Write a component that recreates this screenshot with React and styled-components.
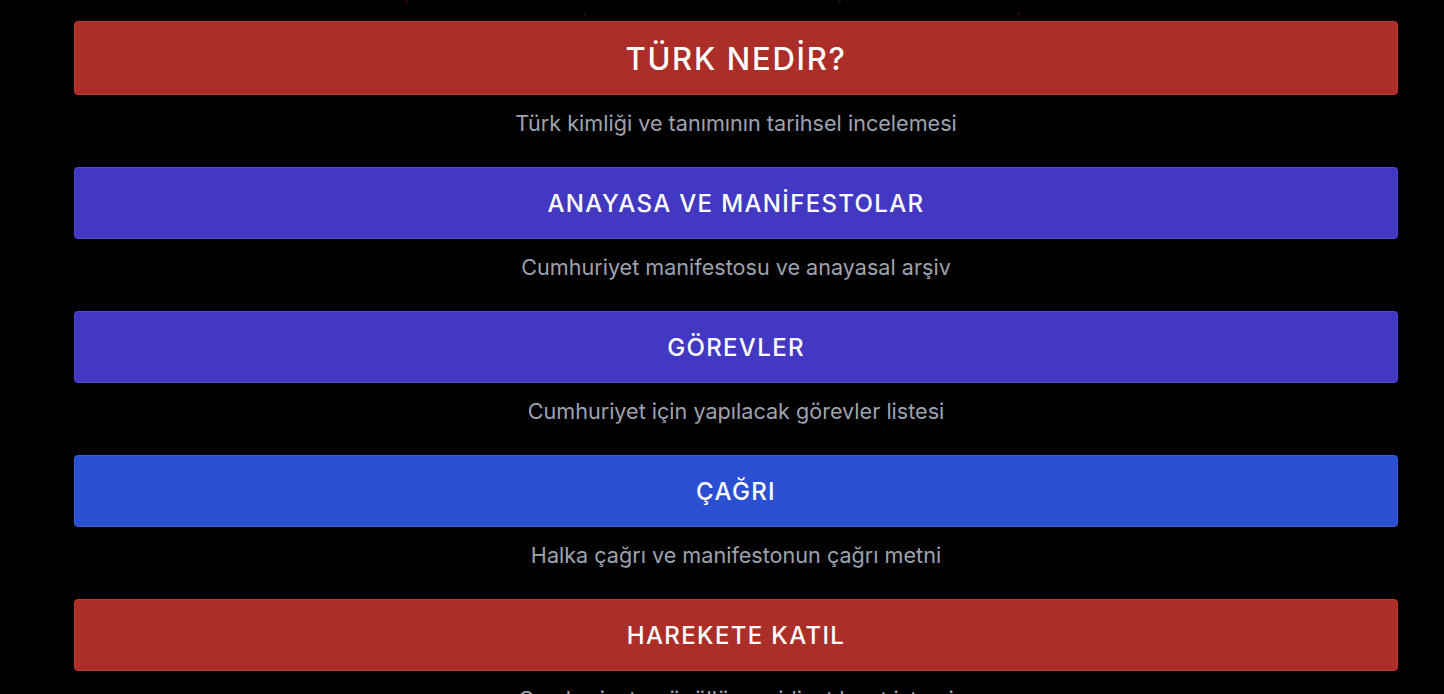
import React from 'react';
import styled, { createGlobalStyle } from 'styled-components';

const sections = [
  { title: 'TÜRK NEDİR?', text: 'Türk kimliği ve tanımının tarihsel incelemesi', tone: 'red', big: true },
  { title: 'ANAYASA VE MANİFESTOLAR', text: 'Cumhuriyet manifestosu ve anayasal arşiv', tone: 'indigo' },
  { title: 'GÖREVLER', text: 'Cumhuriyet için yapılacak görevler listesi', tone: 'indigo' },
  { title: 'ÇAĞRI', text: 'Halka çağrı ve manifestonun çağrı metni', tone: 'blue' },
  { title: 'HAREKETE KATIL', text: 'Cumhuriyete gönüllü ve aidiyet kayıt istemi', tone: 'red' },
];

const stars = [
  { x: 405, y: 0 },
  { x: 583, y: 13 },
  { x: 838, y: 0 },
  { x: 1017, y: 12 },
];

const tones = {
  red: { bg: '#ab2e28', border: '#c23a33' },
  indigo: { bg: '#4338c2', border: '#5247d4' },
  blue: { bg: '#2a4fd0', border: '#3a60e0' },
};

function App() {
  return (
    <>
      <GlobalStyle />
      <Page>
        {stars.map((s) => (
          <Star key={`${s.x}-${s.y}`} style={{ left: s.x, top: s.y }} />
        ))}
        <Menu>
          {sections.map((s) => (
            <Item key={s.title}>
              <MenuButton tone={s.tone} big={s.big}>{s.title}</MenuButton>
              <Caption>{s.text}</Caption>
            </Item>
          ))}
        </Menu>
      </Page>
    </>
  );
}

export default App;

const GlobalStyle = createGlobalStyle`
  html, body {
    margin: 0;
    background: #000;
    font-family: Inter, "Noto Sans", sans-serif;
  }
`;

const Page = styled.div`
  position: relative;
  min-height: 694px;
  background: #000;
  padding: 21px 46px 0 74px;
  overflow: hidden;
`;

const Star = styled.span`
  position: absolute;
  width: 3px;
  height: 3px;
  border-radius: 50%;
  background: #2a0909;
`;

const Menu = styled.div`
  display: flex;
  flex-direction: column;
  gap: 30px;
`;

const Item = styled.div`
  display: flex;
  flex-direction: column;
  align-items: stretch;
  gap: 14px;
`;

const MenuButton = styled.div`
  display: flex;
  align-items: center;
  justify-content: center;
  box-sizing: border-box;
  height: ${(p) => (p.big ? '74px' : '72px')};
  background: ${(p) => tones[p.tone].bg};
  border: 1px solid ${(p) => tones[p.tone].border};
  border-radius: 4px;
  color: #fff;
  font-size: ${(p) => (p.big ? '31px' : '24px')};
  font-weight: 500;
  letter-spacing: ${(p) => (p.big ? '0.055em' : '0.056em')};
`;

const Caption = styled.p`
  margin: 0;
  text-align: center;
  font-size: 21.6px;
  line-height: 28px;
  color: #9ca3af;
`;
